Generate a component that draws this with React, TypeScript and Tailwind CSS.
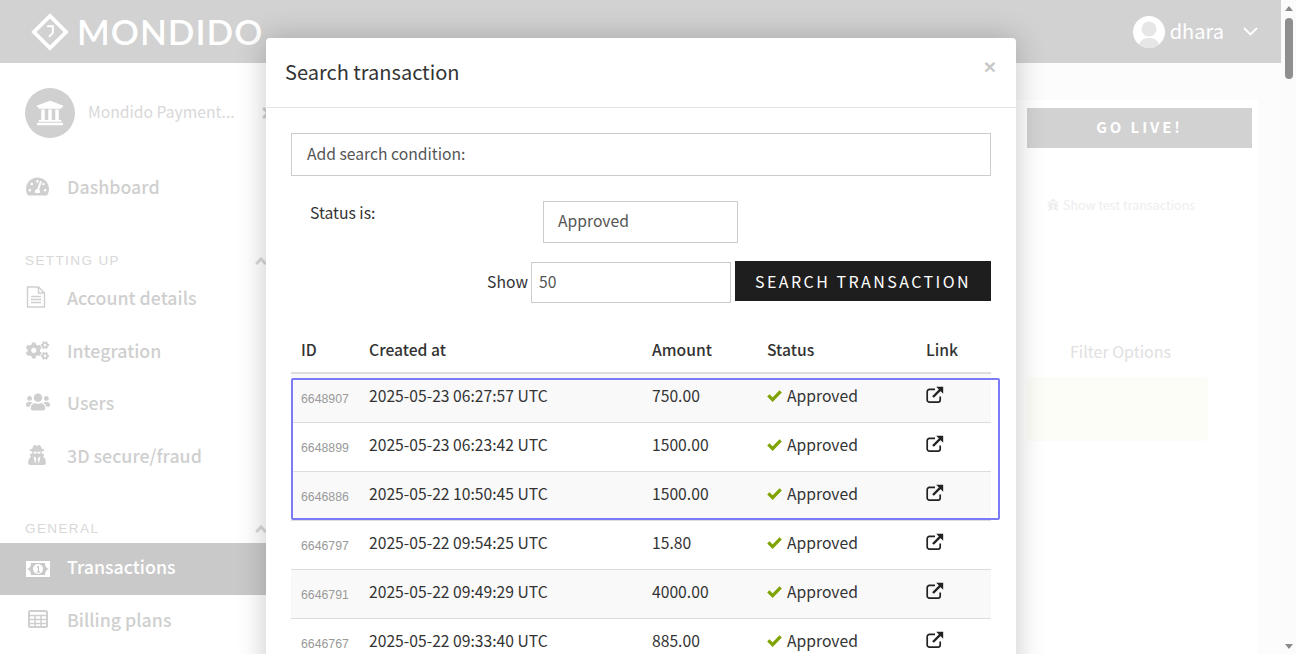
import {
  FaAngleRight,
  FaAngleUp,
  FaBug,
  FaCogs,
  FaTachometerAlt,
  FaUniversity,
  FaUserSecret,
  FaUsers,
} from 'react-icons/fa';

const transactions = [
  { id: '6648907', created: '2025-05-23 06:27:57 UTC', amount: '750.00' },
  { id: '6648899', created: '2025-05-23 06:23:42 UTC', amount: '1500.00' },
  { id: '6646886', created: '2025-05-22 10:50:45 UTC', amount: '1500.00' },
  { id: '6646797', created: '2025-05-22 09:54:25 UTC', amount: '15.80' },
  { id: '6646791', created: '2025-05-22 09:49:29 UTC', amount: '4000.00' },
  { id: '6646767', created: '2025-05-22 09:33:40 UTC', amount: '885.00' },
];

const ExternalLink = () => (
  <svg viewBox="0 0 18 18" className="h-[18px] w-[18px]" fill="none" stroke="#222">
    <path d="M14.2 10.5v3.4a2.2 2.2 0 0 1-2.2 2.2H3.4a2.2 2.2 0 0 1-2.2-2.2V5.6a2.2 2.2 0 0 1 2.2-2.2H9" strokeWidth="1.7" />
    <path d="M7 11 14.6 3.4" strokeWidth="2.4" />
    <path d="M10.2.8h7v7z" fill="#222" stroke="none" />
  </svg>
);

const Check = () => (
  <svg viewBox="0 0 16 13" className="mr-[5px] h-[13px] w-[15px]" fill="none" stroke="#7fa300" strokeWidth="3.4">
    <path d="M1.4 6.4 6 11 14.6 2" />
  </svg>
);

const FileIcon = () => (
  <svg viewBox="0 0 20 22" className="h-[22px] w-[20px]" fill="none" stroke="#cfcfcf" strokeWidth="1.4">
    <path d="M1.5 1h11l6 6v14h-17z" />
    <path d="M12.5 1v6h6M5 10.5h10M5 13.5h10M5 16.5h10" />
  </svg>
);

const TableIcon = () => (
  <svg viewBox="0 0 20 18" className="ml-[2px] h-[18px] w-[20px]" fill="none" stroke="#cfcfcf" strokeWidth="1.5">
    <rect x="1" y="1" width="18" height="16" rx="1.5" strokeWidth="2" />
    <path d="M1 5.5h18M1 9.5h18M1 13.5h18M7 5v12M13 5v12" />
  </svg>
);

const MoneyIcon = () => (
  <svg viewBox="0 0 24 16" className="h-[16px] w-[24px]">
    <rect width="24" height="16" fill="white" />
    <path d="M1 8a5 6 0 0 0 4-6h14a5 6 0 0 0 4 6 5 6 0 0 0-4 6H5a5 6 0 0 0-4-6z" fill="#c9c9c9" />
    <circle cx="12" cy="8" r="5" fill="white" />
    <path d="M10.8 6.2 12.4 5.2v5.6M10.8 11h3.2" fill="none" stroke="#bbb" strokeWidth="1" />
  </svg>
);

function NavItem({ icon, label, className }: { icon: React.ReactNode; label: string; className: string }) {
  return (
    <div className={`flex items-center pl-[26px] text-[#cfcfcf] ${className}`}>
      <span className="flex w-[41px] text-[23px]">{icon}</span>
      <span className="pt-[1px] text-[17.8px] font-medium leading-none">{label}</span>
    </div>
  );
}

function SectionLabel({ label, className }: { label: string; className: string }) {
  return (
    <div className={`flex h-[20px] items-center justify-between pl-[25px] pr-[10px] font-['Liberation_Sans',sans-serif] text-[13.5px] tracking-[1.4px] text-[#d8d8d8] ${className}`}>
      {label}
      <FaAngleUp className="text-[18px] text-[#d8d8d8]" />
    </div>
  );
}

function Sidebar() {
  return (
    <div className="flex w-[280px] shrink-0 flex-col">
      <div className="mt-[25px] flex items-center pl-[25px]">
        <div className="flex h-[50px] w-[50px] items-center justify-center rounded-full bg-[#d0d0d0] text-[28px] text-white">
          <FaUniversity />
        </div>
        <span className="ml-[13px] pb-[2px] text-[15.7px] text-[#d8d8d8]">Mondido Payment...</span>
        <FaAngleRight className="ml-[22px] text-[18px] text-[#d0d0d0]" />
      </div>
      <NavItem className="mt-[35px] h-[26px]" icon={<FaTachometerAlt />} label="Dashboard" />
      <SectionLabel className="mt-[52px]" label="SETTING UP" />
      <NavItem className="mt-[13px] h-[26px]" icon={<FileIcon />} label="Account details" />
      <NavItem className="mt-[27px] h-[26px]" icon={<FaCogs />} label="Integration" />
      <NavItem className="mt-[26px] h-[26px]" icon={<FaUsers className="text-[24px]" />} label="Users" />
      <NavItem className="mt-[27px] h-[26px]" icon={<FaUserSecret className="ml-[1px] text-[20px]" />} label="3D secure/fraud" />
      <SectionLabel className="mt-[51px]" label="GENERAL" />
      <div className="mt-[4px] flex h-[52px] items-center bg-[#c9c9c9] pl-[26px] text-white">
        <span className="flex w-[41px]">
          <MoneyIcon />
        </span>
        <span className="pb-[5px] text-[17.8px] font-medium leading-none">Transactions</span>
      </div>
      <NavItem className="mt-[11px] h-[26px]" icon={<TableIcon />} label="Billing plans" />
    </div>
  );
}

function Main() {
  return (
    <div className="flex flex-1 flex-col bg-[#fcfcfc]">
      <div className="mt-[37px] flex w-[978px] flex-1 flex-col bg-white pl-[747px]">
        <div className="mt-[8px] flex h-[40px] w-[225px] items-center justify-center bg-[#d2d2d2] pb-[2px] text-[15px] font-bold tracking-[2.9px] text-white">
          GO LIVE!
        </div>
        <div className="mt-[48px] flex items-center pl-[20px] text-[12.5px] text-[#eeeeee]">
          <FaBug className="mr-[4px] text-[12px]" />
          Show test transactions
        </div>
        <div className="mt-[124px] w-[187px] text-center text-[16px] text-[#e0e0e0]">Filter Options</div>
        <div className="mt-[14px] h-[64px] w-[181px] rounded-[3px] bg-[#fdfdf8]" />
      </div>
    </div>
  );
}

function Modal() {
  return (
    <div className="absolute left-[266px] top-[38px] h-[640px] w-[750px] rounded-[4px] bg-white text-[15.7px] text-[#333] shadow-[0_0_30px_rgba(0,0,0,0.22)]">
      <div className="flex h-[70px] items-center justify-between border-b border-[#e5e5e5] pl-[19px] pr-[20px]">
        <h4 className="pb-[2px] text-[20px] leading-none text-[#333]">Search transaction</h4>
        <span className="mb-[12px] font-['Liberation_Sans',sans-serif] text-[21px] font-bold leading-none text-[#c8c8c8]">×</span>
      </div>
      <div className="px-[25px] pt-[25px]">
        <div className="flex h-[43px] w-[700px] items-center border border-[#ccc] pb-[1px] pl-[15px] text-[#555]">
          Add search condition:
        </div>
        <div className="mt-[25px] flex items-start">
          <span className="ml-[19px] mt-[1px] w-[233px] leading-[22px]">Status is:</span>
          <div className="flex h-[42px] w-[195px] items-center border border-[#ccc] pb-[3px] pl-[14px] text-[#555]">
            Approved
          </div>
        </div>
        <div className="mt-[18px] flex items-start justify-end">
          <span className="mr-[3px] mt-[9px] leading-[24px]">Show</span>
          <div className="mt-[1px] flex h-[41px] w-[200px] items-center border border-[#ccc] pb-[1px] pl-[7px] text-[#555]">50</div>
          <button className="ml-[4px] h-[40px] w-[256px] bg-[#1e1e1e] text-[16px] tracking-[2.45px] text-white">
            SEARCH TRANSACTION
          </button>
        </div>
        <table className="mt-[23px] w-[700px] table-fixed border-collapse text-left">
          <thead>
            <tr className="h-[47px] border-b-2 border-[#ddd]">
              <th className="w-[68px] pl-[10px] pt-[2px] font-medium">ID</th>
              <th className="w-[283px] pl-[10px] pt-[2px] font-medium">Created at</th>
              <th className="w-[115px] pl-[10px] pt-[2px] font-medium">Amount</th>
              <th className="w-[159px] pl-[10px] pt-[2px] font-medium">Status</th>
              <th className="pl-[10px] pt-[2px] font-medium">Link</th>
            </tr>
          </thead>
          <tbody>
            {transactions.map((t, i) => (
              <tr key={t.id} className={`h-[49px] border-b border-[#ddd] ${i % 2 === 0 ? 'bg-[#f9f9f9]' : 'bg-white'}`}>
                <td className="pl-[10px] pt-[3px] font-['Liberation_Sans',sans-serif] text-[12.3px] text-[#999]">{t.id}</td>
                <td className="pb-[4px] pl-[10px]">{t.created}</td>
                <td className="pb-[4px] pl-[10px]">{t.amount}</td>
                <td className="pb-[4px] pl-[10px]">
                  <span className="flex items-center">
                    <Check />
                    Approved
                  </span>
                </td>
                <td className="pb-[5px] pl-[10px]">
                  <ExternalLink />
                </td>
              </tr>
            ))}
          </tbody>
        </table>
      </div>
      <div className="absolute left-[25px] top-[340px] h-[142px] w-[709px] rounded-[2px] border-2 border-[#7b7bf7]" />
    </div>
  );
}

export default function App() {
  return (
    <div className="relative flex h-[654px] w-[1296px] overflow-hidden bg-white font-['Noto_Sans_CJK_JP','Noto_Sans',sans-serif]">
      <div className="flex min-w-0 flex-1 flex-col">
        <div className="flex h-[63px] shrink-0 items-center bg-[#d2d2d2] pl-[31px] pr-[23px]">
          <svg viewBox="0 0 40 40" className="h-[38px] w-[38px]" fill="none" stroke="white">
            <path d="M20 3 37 20 20 37 3 20Z" strokeWidth="4" />
            <path d="M17 14h6v7l-4 4" strokeWidth="2" />
          </svg>
          <span className="ml-[8px] font-['Lato',sans-serif] text-[35px] font-semibold leading-none tracking-[1px] text-white">MONDIDO</span>
          <div className="ml-auto flex items-center">
            <div className="flex h-[32px] w-[32px] items-end justify-center overflow-hidden rounded-full bg-white">
              <svg viewBox="0 0 32 32" className="h-[32px] w-[32px]" fill="#e6e6e6">
                <circle cx="16" cy="13" r="7.5" />
                <path d="M5 32c1-8 6-10 11-10s10 2 11 10z" />
              </svg>
            </div>
            <span className="ml-[5px] pb-[2px] text-[20px] leading-none text-white">dhara</span>
            <svg viewBox="0 0 15 9" className="ml-[19px] h-[9px] w-[15px]" fill="none" stroke="white" strokeWidth="1.8">
              <path d="M1 1l6.5 6.5L14 1" />
            </svg>
          </div>
        </div>
        <div className="flex min-h-0 flex-1">
          <Sidebar />
          <Main />
        </div>
      </div>
      <div className="relative z-10 flex w-[15px] shrink-0 flex-col items-center bg-[#fbfbfb]">
        <div className="mt-[6px] h-0 w-0 border-x-[4px] border-b-[5px] border-x-transparent border-b-[#8a8a8a]" />
        <div className="mt-[7px] h-[61px] w-[8px] rounded-[4px] bg-[#8f8f8f]" />
        <div className="mb-[5px] mt-auto h-0 w-0 border-x-[4px] border-t-[5px] border-x-transparent border-t-[#8a8a8a]" />
      </div>
      <Modal />
    </div>
  );
}
